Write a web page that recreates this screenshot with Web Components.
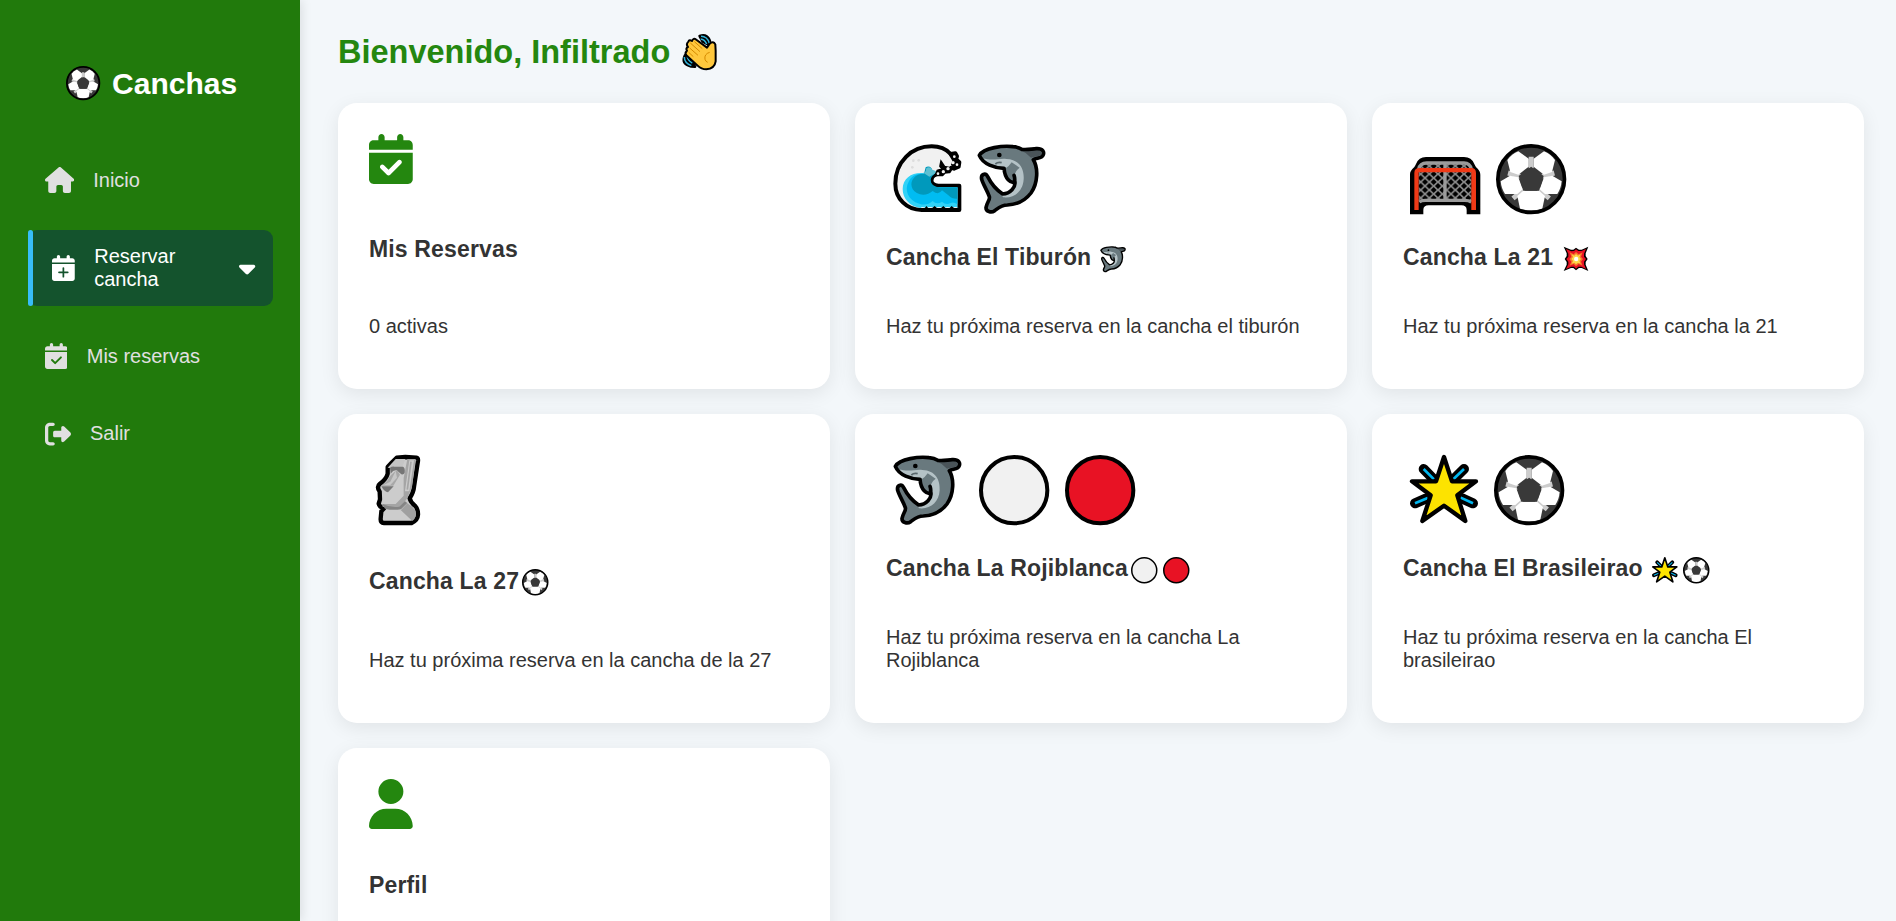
<!DOCTYPE html>
<html lang="es">
<head>
<meta charset="utf-8">
<title>Canchas</title>
<style>
html,body{margin:0;height:100%;overflow:hidden}
body{background:#f3f7fa;font-family:"Liberation Sans",Arial,sans-serif;color:#333}
</style>
</head>
<body>
<canchas-app></canchas-app>
<script>
const CALENDAR = '<path d="M128 0c17.7 0 32 14.3 32 32V64H288V32c0-17.7 14.3-32 32-32s32 14.3 32 32V64h48c26.5 0 48 21.5 48 48v36H0V112C0 85.5 21.5 64 48 64H96V32c0-17.7 14.3-32 32-32zM0 176H448V464c0 26.5-21.5 48-48 48H48c-26.5 0-48-21.5-48-48V176z"/>';
const ICONS = {
  house: [576, '<path d="M575.8 255.5c0 18-15 32.1-32 32.1h-32l.7 160.2c0 2.7-.2 5.4-.5 8.1V472c0 22.1-17.9 40-40 40H456c-1.1 0-2.2 0-3.3-.1c-1.4 .1-2.8 .1-4.2 .1H416 392c-22.1 0-40-17.9-40-40V448 384c0-17.7-14.3-32-32-32H256c-17.7 0-32 14.3-32 32v64 24c0 22.1-17.9 40-40 40H160 128.1c-1.5 0-3-.1-4.5-.2c-1.2 .1-2.4 .2-3.6 .2H104c-22.1 0-40-17.9-40-40V360c0-.9 0-1.9 .1-2.8V287.6H32c-18 0-32-14-32-32.1c0-9 3-17 10-24L266.4 8c7-7 15-8 22-8s15 2 21 7L564.8 231.5c8 7 12 15 11 24z"/>'],
  check: [448, '<path d="M128 0c17.7 0 32 14.3 32 32V64H288V32c0-17.7 14.3-32 32-32s32 14.3 32 32V64h48c26.5 0 48 21.5 48 48v48H0V112C0 85.5 21.5 64 48 64H96V32c0-17.7 14.3-32 32-32zM0 192H448V464c0 26.5-21.5 48-48 48H48c-26.5 0-48-21.5-48-48V192zM329 305c9.4-9.4 9.4-24.6 0-33.9s-24.6-9.4-33.9 0l-95 95-47-47c-9.4-9.4-24.6-9.4-33.9 0s-9.4 24.6 0 33.9l64 64c9.4 9.4 24.6 9.4 33.9 0L329 305z"/>'],
  navcheck: [448, CALENDAR + '<path d="M138 334L200 396L314 282" fill="none" stroke="#217a0c" stroke-width="38" stroke-linecap="round" stroke-linejoin="round"/>'],
  plus: [448, CALENDAR + '<path d="M224 256V428M138 342H310" fill="none" stroke="#14532d" stroke-width="34" stroke-linecap="round"/>'],
  exit: [512, '<path d="M377.9 105.9L500.7 228.7c7.2 7.2 11.3 17.1 11.3 27.3s-4.1 20.1-11.3 27.3L377.9 406.1c-6.4 6.4-15 9.9-24 9.9c-18.7 0-33.9-15.2-33.9-33.9l0-62.1-128 0c-17.7 0-32-14.3-32-32l0-64c0-17.7 14.3-32 32-32l128 0 0-62.1c0-18.7 15.2-33.9 33.9-33.9c9 0 17.6 3.6 24 9.9zM160 96L96 96c-17.7 0-32 14.3-32 32l0 256c0 17.7 14.3 32 32 32l64 0c17.7 0 32 14.3 32 32s-14.3 32-32 32l-64 0c-53 0-96-43-96-96L0 128C0 75 43 32 96 32l64 0c17.7 0 32 14.3 32 32s-14.3 32-32 32z"/>'],
  user: [448, '<path d="M224 256A128 128 0 1 0 224 0a128 128 0 1 0 0 256zm-45.7 48C79.8 304 0 383.8 0 482.3C0 498.7 13.3 512 29.7 512H418.3c16.4 0 29.7-13.3 29.7-29.7C448 383.8 368.2 304 269.7 304H178.3z"/>'],
  caret: [320, '<path d="M137.4 374.6c12.5 12.5 32.8 12.5 45.3 0l128-128c9.2-9.2 11.9-22.9 6.9-34.9s-16.6-19.8-29.6-19.8L32 192c-12.9 0-24.6 7.8-29.6 19.8s-2.2 25.7 6.9 34.9l128 128z"/>']
};

// each entry: x, y, width, height of the viewBox, then the drawing
const EMOJI = {
  ball: [319, 42, 211, 211, `
    <circle cx="424.5" cy="147.5" r="100" fill="#393939"/>
    <path d="M424.5 80V115M355 129L392 139M494 129L457 139M403 178L370 205M446 178L479 205" stroke="#ccc" stroke-width="15"/>
    <g fill="#fff">
      <path d="M386 64L417 86V110L386 134L362 126L353 90Q366 72 386 64Z"/>
      <path d="M463 64L432 86V110L463 134L487 126L496 90Q483 72 463 64Z"/>
      <path d="M333 154L361 137L386 142L399 178L383 192H346Q335 176 333 154Z"/>
      <path d="M516 154L488 137L463 142L450 178L466 192H503Q514 176 516 154Z"/>
      <path d="M401 182H448L466 198L458 236Q424 246 391 236L383 198Z"/>
    </g>
    <path d="M424.5 110L462 138L448 182H401L387 138Z" fill="#393939"/>
    <circle cx="424.5" cy="147.5" r="100" fill="none" stroke="#000" stroke-width="11"/>`],
  white: [299, 44, 211, 211, '<circle cx="404.5" cy="149.500" r="99.500" fill="#f1f1f1" stroke="#000" stroke-width="12"/>'],
  red: [557, 44, 211, 211, '<circle cx="662.5" cy="149.500" r="99.500" fill="#e81224" stroke="#000" stroke-width="12"/>'],
  wave: [39, 41, 207, 205, `
    <path d="M238 239H125C80 239 46 205 46 160C46 95 95 48 155 48C180 48 200 58 212 71L226 69L231 78L228 87L238 96L236 109L222 115L214 112L207 123L194 124L186 132L176 131C150 134 145 164 175 166H238Z" fill="#f1f1f1" stroke="#000" stroke-width="12" stroke-linejoin="round"/>
    <path d="M236 233Q226 226 215 234Q203 226 190 234Q177 226 164 234Q151 226 138 234Q126 226 122 233C88 228 68 204 68 176C68 142 97 125 130 128L150 136C142 158 154 171 173 170H232V233Z" fill="#31d2f7"/>
    <path d="M232 222Q222 214 212 218Q198 226 186 214Q170 224 158 212Q140 228 118 220C84 210 72 178 86 154C95 134 115 126 140 132L151 150C152 166 163 171 178 171H232Z" fill="#00bcf2"/>
    <path d="M232 205Q215 206 207 196L186 180Q176 196 158 182Q142 196 120 192C92 184 88 156 102 142Q112 130 132 130L137 111C146 104 157 112 157 120Q174 124 163 132C144 145 150 169 178 171H232Z" fill="#0099bc"/>
    <path d="M130 127Q140 124 138 115Q150 105 158 120Q170 120 168 128L148 139Z" fill="#5cc0d2"/>
    <path d="M122 239Q132 238 139 227Q149 242 164 227Q177 242 190 227Q203 242 215 227Q226 240 238 234V240Z" fill="#000"/>
    <path d="M183 93L194 109L208 112L205 122L177 129L166 134L172 120L186 116L180 108Z" fill="#000" stroke="#000" stroke-width="5"/>
    <path d="M205 72L224 70L236 88L237 111L222 116L213 103L217 91Z" fill="#000"/>
    <g fill="#f1f1f1"><circle cx="223" cy="79" r="4"/><circle cx="219" cy="97" r="5"/><circle cx="231" cy="103" r="4"/><circle cx="204" cy="115" r="5"/><circle cx="190" cy="124" r="5"/><circle cx="174" cy="130" r="4"/><circle cx="196" cy="96" r="5"/></g>
    <g fill="#ddd"><circle cx="100" cy="91" r="4"/><circle cx="116" cy="90" r="4"/><circle cx="97" cy="111" r="4"/></g>`],
  shark: [290, 42, 206, 211, `
    <path d="M297 76C310 53 370 46 398 50Q414 51 424 58C440 60 452 57 468 56C488 55 493 66 488 76C484 86 468 83 459 89C474 113 473 160 452 189C432 215 407 224 381 225C362 225 353 235 343 242C332 250 317 244 317 233C320 216 330 209 327 200C320 180 308 163 304 148C301 133 315 127 322 140C331 158 350 181 367 192C390 192 407 171 403 156C391 160 374 148 371 115C344 114 308 103 297 76Z" fill="#69797e"/>
    <path d="M421 61C440 64 456 61 470 61C484 62 484 70 482 74C474 80 462 79 452 83Q440 69 421 61Z" fill="#4a5459"/>
    <path d="M306 85C340 94 358 84 378 87C418 88 432 118 430 148C428 184 402 206 368 202L361 189C390 192 409 169 402 151L376 112C344 112 318 101 306 85Z" fill="#b4c2c6"/>
    <path d="M394 97L418 113Q400 124 401 155Q379 153 377 114Q386 109 394 97Z" fill="#69797e"/>
    <path d="M345 102Q353 95 364 98" fill="none" stroke="#58666b" stroke-width="5"/>
    <circle cx="357" cy="75" r="7"/>
    <path d="M297 76C310 53 370 46 398 50Q414 51 424 58C440 60 452 57 468 56C488 55 493 66 488 76C484 86 468 83 459 89C474 113 473 160 452 189C432 215 407 224 381 225C362 225 353 235 343 242C332 250 317 244 317 233C320 216 330 209 327 200C320 180 308 163 304 148C301 133 315 127 322 140C331 158 350 181 367 192C390 192 407 171 403 156C391 160 374 148 371 115C344 114 308 103 297 76Z" fill="none" stroke="#000" stroke-width="11" stroke-linejoin="round"/>
    <path d="M403 158Q404 142 401 136" stroke="#000" stroke-width="11" fill="none" stroke-linecap="round"/>`],
  goal: [62, 81, 211, 172, `
    <defs><pattern id="n" x="94" y="96" width="26" height="24" patternUnits="userSpaceOnUse"><rect width="26" height="24" fill="#8a8a8a"/><path d="M13 3L22 12L13 21L4 12ZM0 -9L9 0L0 9L-9 0ZM26 -9L35 0L26 9L17 0ZM0 15L9 24L0 33L-9 24ZM26 15L35 24L26 33L17 24Z" fill="#000"/></pattern></defs>
    <path d="M62 253V134C62 118 75 116 80 102Q88 81 110 81H224Q247 81 255 102C260 116 273 118 273 134V253H232V240Q232 226 216 226H118Q102 226 102 240V253Z"/>
    <path d="M88 120Q90 99 110 99H226Q244 99 247 120V212H88Z" fill="url(#n)"/>
    <path d="M88 118Q92 99 112 99H224Q242 99 246 118M90 216Q96 211 108 211H226Q238 211 246 216M167 99V211" fill="none" stroke="#9b9b9b" stroke-width="10"/>
    <path d="M75 240V129Q75 114 90 114H246Q260 114 260 129V240H246V127H88V240Z" fill="#f03a17"/>`],
  moai: [49, 44, 134, 212, `
    <path d="M111 52L137 50L170 52Q176 53 175 62L163 140Q162 155 150 174Q153 187 166 196Q176 207 175 224Q174 240 156 248H73Q62 247 63 235L65 213L74 203Q60 202 57 190L61 177L60 154Q50 139 60 131Q80 116 84 100V80L95 68Z" fill="#ccc" stroke="#000" stroke-width="13" stroke-linejoin="round"/>
    <path d="M84 82L108 56H137L128 80L96 84Z" fill="#c5c5c5"/>
    <path d="M143 56H168L157 140L143 172L124 202Q92 207 69 199L68 191H108L132 166V113Z" fill="#a5a5a5"/>
    <path d="M149 60H163L149 153H136Z" fill="#ccc"/>
    <path d="M154 64L143 148" stroke="#a5a5a5" stroke-width="5"/>
    <path d="M91 82Q96 78 104 79H130Q137 82 135 97Q132 104 125 102L111 90Q101 88 93 100Z" fill="#767676"/>
    <path d="M112 90Q93 101 83 121L66 136H101L121 103Z" fill="#a8a8a8"/><path d="M108 92L92 124L72 134H92L112 112Z" fill="#c7c7c7"/>
    <path d="M65 138H102L85 156Q74 155 65 138Z" fill="#767676"/>
    <path d="M68 191L76 205Q98 211 124 207L143 188L136 183L119 199Q94 203 68 191Z" fill="#858585"/>
    <path d="M124 209L143 189Q169 205 169 221Q168 235 158 242L123 209Z" fill="#a0a0a0"/>`],
  star: [62, 44, 205, 206, `
    <path d="M103 86L130 114M224 86L196 114M77 189L109 175M251 189L218 174" stroke="#000" stroke-width="30" stroke-linecap="round"/>
    <path d="M103 86L134 117M224 86L192 117M77 189L115 173M251 189L214 172" stroke="#00b7f0" stroke-width="8"/>
    <path d="M164 50L188 123H260L204 165L228 242L164 196L99 242L124 165L68 123H140Z" fill="#fde300" stroke="#000" stroke-width="13" stroke-linejoin="round"/>`],
  boom: [518, 341, 78, 77, `
    <path d="M520 343L542 352L549 352L557 346L566 352L574 352L594 343L586 363L586 371L592 380L586 389L586 397L594 416L574 407L566 407L557 414L549 407L542 407L520 416L529 397L529 389L523 380L529 371L529 363Z"/>
    <path d="M527 350L543 357L551 356L557 351L564 356L573 356L587 350L581 364L581 373L587 380L581 388L581 396L587 410L573 403L564 403L557 409L551 403L543 403L527 410L534 396L534 388L528 380L534 373L534 364Z" fill="#e81224"/>
    <path d="M538 360L550 366L557 359L565 366L577 360L572 373L578 380L572 388L577 400L565 395L557 402L550 395L538 400L543 388L537 380L543 373Z" fill="#f7782b"/>
    <path d="M544 366L552 370L557 365L563 370L571 366L567 374L572 380L567 386L571 394L563 391L557 396L552 391L544 394L548 386L543 380L548 374Z" fill="#fdd94a"/><circle cx="557.5" cy="380" r="6.500" fill="#fff"/>`],
  hand: [1058, 38, 104, 112, `
    <path d="M1111 47Q1137 39 1143 67L1140 74L1120 64ZM1067 105Q1054 131 1085 138L1097 139L1082 113Z" fill="#000" stroke="#000" stroke-width="8" stroke-linejoin="round"/>
    <path d="M1115 48Q1134 48 1140 69M1114 56Q1126 57 1132 71M1065 110Q1065 128 1086 136M1074 108Q1074 120 1089 128" fill="none" stroke="#31b5dc" stroke-width="4.500"/>
    <path d="M1077 64Q1080 57 1088 62Q1092 51 1101 58L1133 82L1141 70Q1152 60 1158 72L1159 91V123Q1156 145 1131 147Q1116 147 1105 136L1071 105Q1065 98 1073 91Q1068 84 1076 80Q1069 72 1077 64Z" fill="#ffc83d" stroke="#000" stroke-width="6" stroke-linejoin="round"/>
    <path d="M1083 68L1112 94M1095 64L1119 85M1081 83L1106 105M1078 96L1092 109M1141 96Q1124 101 1127 117Q1129 124 1135 126" fill="none" stroke="#d48a00" stroke-width="3"/>`]
};

class FaIcon extends HTMLElement {
  connectedCallback() {
    const [w, d] = ICONS[this.getAttribute('name')];
    const s = +(this.getAttribute('size') || 26);
    this.attachShadow({mode: 'open'}).innerHTML =
      `<style>:host{display:block;flex:none}svg{display:block;fill:currentColor}</style><svg width="${w / 512 * s}" height="${s}" viewBox="0 0 ${w} 512">${d}</svg>`;
  }
}
customElements.define('fa-icon', FaIcon);

class EmojiGlyph extends HTMLElement {
  connectedCallback() {
    const [x, y, w, h, d] = EMOJI[this.getAttribute('name')];
    const k = +(this.getAttribute('scale') || 1 / 3);
    this.attachShadow({mode: 'open'}).innerHTML =
      `<style>:host{display:inline-block;flex:none}svg{display:block;overflow:visible}</style><svg width="${w * k}" height="${h * k}" viewBox="${x} ${y} ${w} ${h}">${d}</svg>`;
  }
}
customElements.define('emoji-glyph', EmojiGlyph);

class NavItem extends HTMLElement {
  connectedCallback() {
    const active = this.hasAttribute('active');
    this.attachShadow({mode: 'open'}).innerHTML = `<style>
      :host{position:relative;display:flex;align-items:center;gap:19.500px;box-sizing:border-box;height:55px;padding:0 16.500px;color:#e0e0e0;font-size:20px;line-height:23px;border-radius:9px}
      :host([active]){height:76px;background:#14532d;color:#fff;padding:0 17.500px 0 24px}
      :host([active])::before{content:"";position:absolute;left:0;top:0;bottom:0;width:5px;border-radius:2.500px;background:#38bdf8}
      span{flex:1}
    </style><fa-icon name="${this.getAttribute('icon')}"></fa-icon><span><slot></slot></span>${active ? '<fa-icon name="caret"></fa-icon>' : ''}`;
  }
}
customElements.define('nav-item', NavItem);

class SideBar extends HTMLElement {
  connectedCallback() {
    this.attachShadow({mode: 'open'}).innerHTML = `<style>
      :host{display:block;box-sizing:border-box;width:300px;height:100%;padding:66px 27px 0 28px;background:#217a0c;box-shadow:2px 0 10px rgba(0,0,0,.1);position:relative}
      .logo{display:flex;align-items:center;gap:11.500px;margin-left:38.300px;height:35px;font-size:30px;font-weight:700;color:#fff}
      nav{display:flex;flex-direction:column;gap:22.500px;margin-top:51.500px}
    </style>
    <div class="logo"><emoji-glyph name="ball" scale=".1625"></emoji-glyph><span>Canchas</span></div>
    <nav>
      <nav-item icon="house">Inicio</nav-item>
      <nav-item icon="plus" active>Reservar<br>cancha</nav-item>
      <nav-item icon="navcheck">Mis reservas</nav-item>
      <nav-item icon="exit">Salir</nav-item>
    </nav>`;
  }
}
customElements.define('side-bar', SideBar);

class CourtCard extends HTMLElement {
  connectedCallback() {
    this.attachShadow({mode: 'open'}).innerHTML = `<style>
      :host{display:block;box-sizing:border-box;padding:31px;border-radius:19px;background:#fff;box-shadow:0 5px 19px rgba(0,0,0,.08)}
      .pic{display:flex;align-items:flex-start;height:var(--pic,110px)}
      h3{margin:0;height:26px;font-size:23px;line-height:26px;letter-spacing:.15px;white-space:nowrap}
      p{margin:var(--gap,45px) 0 0;font-size:20px;line-height:23px}
      ::slotted(emoji-glyph[slot=title]){vertical-align:-5px;margin-top:-6px;margin-bottom:-2px}
      ::slotted(emoji-glyph[slot=pic]){margin-top:10px}
    </style>
    <div class="pic"><slot name="pic"></slot></div>
    <h3>${this.getAttribute('heading')}<slot name="title"></slot></h3>
    <p><slot></slot></p>`;
  }
}
customElements.define('court-card', CourtCard);

class CanchasApp extends HTMLElement {
  connectedCallback() {
    this.attachShadow({mode: 'open'}).innerHTML = `<style>
      :host{display:flex;height:100vh;overflow:hidden}
      side-bar{flex:none}
      main{flex:1;padding:33px 32px 0 38px}
      h1{display:flex;align-items:flex-start;margin:0 0 32px;height:38px;font-size:32.500px;line-height:38px;color:#24870f}
      .grid{display:grid;grid-template-columns:repeat(3,1fr);grid-template-rows:286px 309px 286px;gap:25px}
      fa-icon{color:#24870f}
    </style>
    <side-bar></side-bar>
    <main>
      <h1>Bienvenido, Infiltrado<emoji-glyph name="hand" style="margin-left:12px"></emoji-glyph></h1>
      <div class="grid">
        <court-card heading="Mis Reservas" style="--pic:102px;--gap:53px"><fa-icon slot="pic" name="check" size="50"></fa-icon>0 activas</court-card>
        <court-card heading="Cancha El Tiburón"><emoji-glyph slot="pic" name="wave" style="margin-left:7px"></emoji-glyph><emoji-glyph slot="pic" name="shark" style="margin-left:14.500px"></emoji-glyph><emoji-glyph slot="title" name="shark" scale=".1256" style="margin-left:9px"></emoji-glyph>Haz tu próxima reserva en la cancha el tiburón</court-card>
        <court-card heading="Cancha La 21"><emoji-glyph slot="pic" name="goal" style="margin-left:7.300px;margin-top:23px"></emoji-glyph><emoji-glyph slot="pic" name="ball" style="margin-left:15px"></emoji-glyph><emoji-glyph slot="title" name="boom" style="margin-left:10px"></emoji-glyph>Haz tu próxima reserva en la cancha la 21</court-card>
        <court-card heading="Cancha La 27" style="--pic:122.500px;--gap:55.500px"><emoji-glyph slot="pic" name="moai" style="margin-left:7.200px"></emoji-glyph><emoji-glyph slot="title" name="ball" scale=".1256" style="margin-left:3px"></emoji-glyph>Haz tu próxima reserva en la cancha de la 27</court-card>
        <court-card heading="Cancha La Rojiblanca"><emoji-glyph slot="pic" name="shark" style="margin-left:7px"></emoji-glyph><emoji-glyph slot="pic" name="white" style="margin-left:17px"></emoji-glyph><emoji-glyph slot="pic" name="red" style="margin-left:15.700px"></emoji-glyph><emoji-glyph slot="title" name="white" scale=".1256" style="margin-left:3px"></emoji-glyph><emoji-glyph slot="title" name="red" scale=".1256" style="margin-left:5.500px"></emoji-glyph>Haz tu próxima reserva en la cancha La<br>Rojiblanca</court-card>
        <court-card heading="Cancha El Brasileirao"><emoji-glyph slot="pic" name="star" style="margin-left:7.300px"></emoji-glyph><emoji-glyph slot="pic" name="ball" style="margin-left:15.300px"></emoji-glyph><emoji-glyph slot="title" name="star" scale=".1256" style="margin-left:9.500px"></emoji-glyph><emoji-glyph slot="title" name="ball" scale=".1256" style="margin-left:5px"></emoji-glyph>Haz tu próxima reserva en la cancha El<br>brasileirao</court-card>
        <court-card heading="Perfil" style="--pic:92.500px"><fa-icon slot="pic" name="user" size="50"></fa-icon></court-card>
      </div>
    </main>`;
  }
}
customElements.define('canchas-app', CanchasApp);
</script>
</body>
</html>
